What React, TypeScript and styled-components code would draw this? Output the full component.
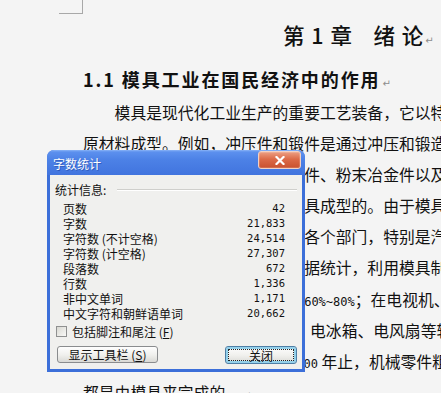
import styled, { createGlobalStyle, css } from "styled-components";

const GlobalStyle = createGlobalStyle`
  html, body {
    margin: 0;
    padding: 0;
    background: #f4f4f4;
  }
`;

const Page = styled.div`
  position: relative;
  width: 441px;
  height: 393px;
  overflow: hidden;
  background: #f4f4f4;
  color: #111;
  font-family: "Noto Sans CJK SC", "Noto Sans", sans-serif;
`;

const CornerMark = styled.div`
  box-sizing: border-box;
  width: 24px;
  height: 14px;
  margin-left: 59px;
  border-right: 1px solid #a8a8a8;
  border-bottom: 1px solid #a8a8a8;
`;

const ChapterTitle = styled.h1`
  margin: 6px 0 0;
  height: 30px;
  padding-left: 283px;
  font-size: 21.5px;
  font-weight: 500;
  line-height: 30px;
  white-space: nowrap;
  word-spacing: 2px;
`;

const SectionTitle = styled.h2`
  margin: 14px 0 0;
  height: 30px;
  padding-left: 83px;
  font-size: 18px;
  font-weight: 700;
  line-height: 30px;
  letter-spacing: 1.9px;
  white-space: nowrap;
`;

const Paragraph = styled.div`
  margin-top: 2.5px;
  padding-left: 83px;
  font-size: 15.8px;
  line-height: 31.2px;
`;

const Line = styled.div<{ $indent?: boolean }>`
  height: 31.2px;
  white-space: nowrap;
  text-indent: ${(p) => (p.$indent ? "2em" : "0")};
`;

const Latin = styled.span`
  font-family: "DejaVu Sans Mono", monospace;
  font-size: 12px;
  line-height: 0;
`;

const ReturnMark = styled.span`
  font-family: "DejaVu Sans", sans-serif;
  font-size: 10px;
  font-weight: 400;
  line-height: 0;
  color: #8c8c8c;
  margin-left: 2px;
  letter-spacing: 0;
  word-spacing: 0;
`;

/* ---- word count dialog ---- */

const Dialog = styled.div`
  position: absolute;
  left: 47px;
  top: 150px;
  width: 258px;
  display: flex;
  flex-direction: column;
  background: #3c6fd9;
  border-radius: 7px 7px 0 0;
  font-family: "Noto Sans CJK SC", sans-serif;
  font-size: 12px;
  color: #111;
`;

const TitleBar = styled.div`
  height: 25px;
  display: flex;
  align-items: flex-start;
  justify-content: space-between;
  padding: 1px 4px 0 6px;
  box-sizing: border-box;
  border-radius: 7px 7px 0 0;
  background: linear-gradient(#8ab4f7 0, #5c90ee 2px, #4c81e6 40%, #4174de 100%);
`;

const TitleText = styled.span`
  padding-top: 5px;
  line-height: 16px;
  color: #fff;
  font-size: 12px;
  text-shadow: 1px 1px 0 rgba(20, 50, 140, 0.45);
`;

const CloseButton = styled.button`
  box-sizing: border-box;
  width: 43px;
  height: 18px;
  padding: 0;
  display: flex;
  align-items: center;
  justify-content: center;
  border: 1px solid #f3d0c2;
  border-radius: 3px;
  background: linear-gradient(#ec9f83, #dc6a48 45%, #c9512f 100%);
  box-shadow: inset 0 0 0 1px rgba(255, 255, 255, 0.15);
`;

const Body = styled.div`
  margin: 0 3px 3px;
  padding: 8px 5px 5px;
  display: flex;
  flex-direction: column;
  background: #f0f0ee;
`;

const GroupHeader = styled.div`
  height: 14px;
  line-height: 14px;
  display: flex;
  align-items: center;
  gap: 11px;
`;

const Etched = styled.div`
  flex: 1;
  height: 0;
  border-top: 1px solid #cfcfcc;
  border-bottom: 1px solid #ffffff;
`;

const StatList = styled.div`
  margin: 4px 12px 0 8px;
  display: flex;
  flex-direction: column;
`;

const StatRow = styled.div`
  height: 15px;
  line-height: 15px;
  display: flex;
  justify-content: space-between;
  align-items: center;
`;

const StatValue = styled.span`
  font-family: "DejaVu Sans Mono", monospace;
  font-size: 10.5px;
`;

const CheckRow = styled.div`
  margin-top: 3px;
  height: 14px;
  padding-left: 1px;
  display: flex;
  align-items: center;
  gap: 5px;
`;

const CheckBox = styled.span`
  box-sizing: border-box;
  width: 11px;
  height: 11px;
  border: 1px solid #8f9090;
  background: linear-gradient(135deg, #d8d8d2 0%, #f9f9f7 100%);
`;

const Mnemonic = styled.span`
  text-decoration: underline;
  text-underline-offset: 1px;
`;

const ButtonRow = styled.div`
  margin-top: 8px;
  padding-left: 2px;
  display: flex;
  justify-content: space-between;
  align-items: flex-start;
`;

const Button = styled.button<{ $width: number; $default?: boolean }>`
  box-sizing: border-box;
  width: ${(p) => p.$width}px;
  height: 17px;
  padding: 0;
  font-family: inherit;
  font-size: 12px;
  line-height: 13px;
  color: #111;
  border: 1px solid #8a8c8e;
  border-radius: 3px;
  background: linear-gradient(#fefefe, #efefec 55%, #d9d9d5);
  ${(p) =>
    p.$default &&
    css`
      height: 18px;
      border-color: #4f7fa6;
      box-shadow: inset 0 0 0 2px #93d0ea;
      outline: 1px dotted #222;
      outline-offset: -4px;
    `}
`;

const bodyLines = [
  "模具是现代化工业生产的重要工艺装备，它以特定的形状通过一定的方式使",
  "原材料成型。例如，冲压件和锻件是通过冲压和锻造方式使材料在模具内发",
  "生塑性变形而获得的；金属压铸件、粉末冶金件以及塑料、陶瓷、橡胶、玻璃等",
  "非金属制品，绝大多数也是用模具成型的。由于模具成型具有优质、高产、省料和",
  "低成本等特点，现已在国民经济各个部门，特别是汽车、拖拉机、航空航天、轻工等",
  "工业部门得到极其广泛的应用。据统计，利用模具制造的零件，在飞机、汽车、拖拉机、",
  "电器、仪器仪表等机电产品中占60%~80%；在电视机、录音机、计算机等电子产品",
  "中占80%以上；在手表、洗衣机、电冰箱、电风扇等轻工产",
  "品中占 85% 以上。据预测，到 2000 年止，机械零件粗加工的 75%，精加工的 50%",
  "都是由模具来完成的。",
];

const stats = [
  { label: "页数", value: "42" },
  { label: "字数", value: "21,833" },
  { label: "字符数 (不计空格)", value: "24,514" },
  { label: "字符数 (计空格)", value: "27,307" },
  { label: "段落数", value: "672" },
  { label: "行数", value: "1,336" },
  { label: "非中文单词", value: "1,171" },
  { label: "中文字符和朝鲜语单词", value: "20,662" },
];

function renderMixed(text: string) {
  return text
    .split(/([0-9%~]+)/)
    .map((part, i) => (/^[0-9%~]+$/.test(part) ? <Latin key={i}>{part}</Latin> : part));
}

function App() {
  return (
    <Page>
      <GlobalStyle />
      <CornerMark />
      <ChapterTitle>
        第 1 章　绪 论<ReturnMark>↵</ReturnMark>
      </ChapterTitle>
      <SectionTitle>
        1.1 模具工业在国民经济中的作用<ReturnMark>↵</ReturnMark>
      </SectionTitle>
      <Paragraph>
        {bodyLines.map((text, i) => (
          <Line key={i} $indent={i === 0}>
            {renderMixed(text)}
            {i === bodyLines.length - 1 && <ReturnMark>↵</ReturnMark>}
          </Line>
        ))}
      </Paragraph>

      <Dialog>
        <TitleBar>
          <TitleText>字数统计</TitleText>
          <CloseButton aria-label="关闭">
            <svg width="10" height="9" viewBox="0 0 10 9">
              <path d="M1.5 1 L8.5 8 M8.5 1 L1.5 8" stroke="#fff" strokeWidth="2.2" strokeLinecap="square" />
            </svg>
          </CloseButton>
        </TitleBar>
        <Body>
          <GroupHeader>
            <span>统计信息:</span>
            <Etched />
          </GroupHeader>
          <StatList>
            {stats.map((s) => (
              <StatRow key={s.label}>
                <span>{s.label}</span>
                <StatValue>{s.value}</StatValue>
              </StatRow>
            ))}
          </StatList>
          <CheckRow>
            <CheckBox />
            <span>
              包括脚注和尾注 (<Mnemonic>F</Mnemonic>)
            </span>
          </CheckRow>
          <ButtonRow>
            <Button $width={101}>
              显示工具栏 (<Mnemonic>S</Mnemonic>)
            </Button>
            <Button $width={72} $default>
              关闭
            </Button>
          </ButtonRow>
        </Body>
      </Dialog>
    </Page>
  );
}

export default App;
